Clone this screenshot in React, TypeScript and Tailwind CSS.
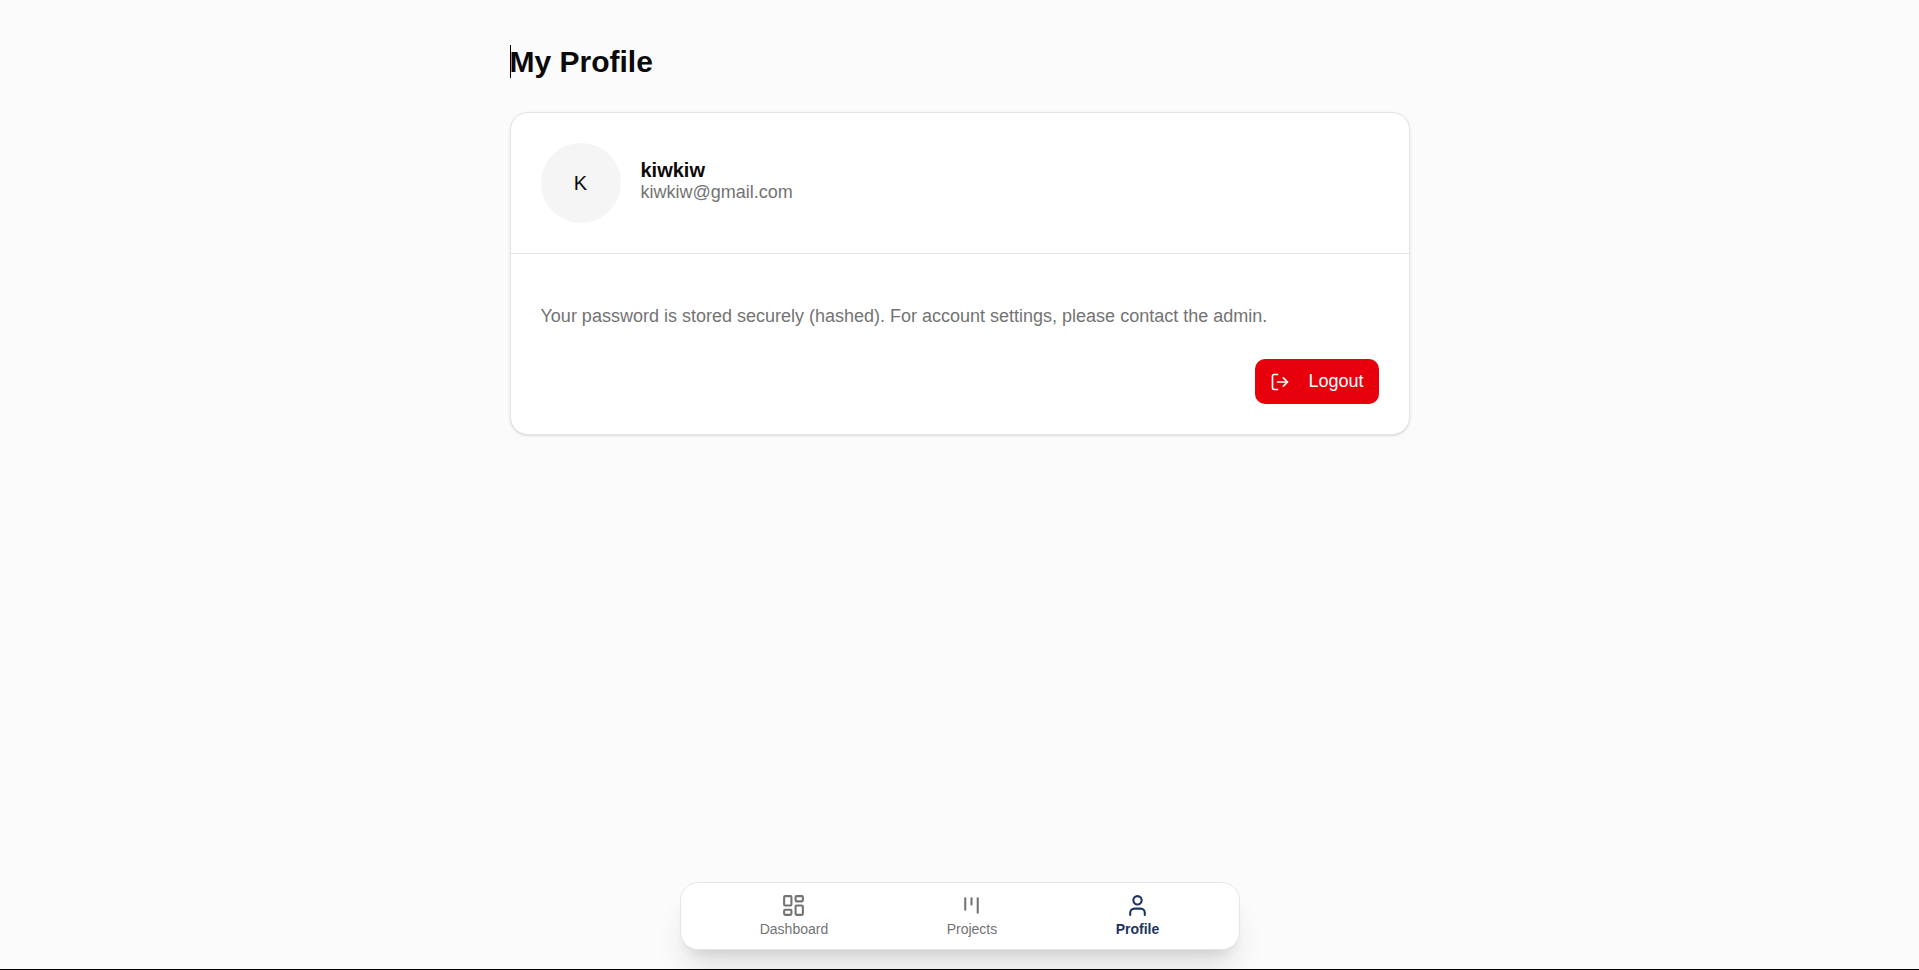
import React from "react";
import { LayoutDashboard, LogOut, User } from "lucide-react";

function KanbanIcon() {
  return (
    <svg
      aria-hidden="true"
      viewBox="0 0 24 24"
      fill="none"
      stroke="currentColor"
      strokeWidth="2"
      strokeLinecap="round"
      strokeLinejoin="round"
      className="size-[25px]"
    >
      <path d="M6 5v11" />
      <path d="M12 5v6" />
      <path d="M18 5v14" />
    </svg>
  );
}

type NavItemProps = {
  label: string;
  icon: React.ReactNode;
  active?: boolean;
};

function NavItem({ label, icon, active = false }: NavItemProps) {
  return (
    <a
      href="#"
      aria-current={active ? "page" : undefined}
      className={
        active
          ? "flex flex-col items-center gap-0.5 font-bold text-[#1c355e]"
          : "flex flex-col items-center gap-0.5 text-[#737373]"
      }
    >
      {icon}
      <span className="text-[14px] leading-[19px]">{label}</span>
    </a>
  );
}

export default function App() {
  return (
    <div className="flex min-h-screen flex-col border-b border-black bg-[#fbfbfb] font-['Liberation_Sans',Arial,sans-serif] text-[#0a0a0a]">
      <main className="mx-auto w-full max-w-[900px] grow pt-10">
        <h1 className="relative mb-7 text-[30px] leading-[44px] font-bold">
          <span className="absolute top-[5px] left-0 h-[33px] w-px bg-black" />
          My Profile
        </h1>

        <section className="rounded-[18px] border border-[#e5e5e5] bg-white shadow-sm">
          <div className="flex items-center gap-5 border-b border-[#e5e5e5] p-[30px]">
            <div className="flex size-20 items-center justify-center rounded-full bg-[#f5f5f5] text-[20px]">
              K
            </div>
            <div className="pb-1">
              <h2 className="text-[20px] leading-[22px] font-bold">kiwkiw</h2>
              <p className="text-[18px] leading-[22px] text-[#737373]">kiwkiw@gmail.com</p>
            </div>
          </div>

          <div className="px-[30px] pt-12 pb-[30px]">
            <p className="text-[18px] leading-7 text-[#737373]">
              Your password is stored securely (hashed). For account settings, please contact the
              admin.
            </p>
            <div className="mt-[29px] flex justify-end">
              <button
                type="button"
                className="flex h-[45px] items-center gap-[18px] rounded-[10px] bg-[#e7000b] px-[15px] text-[18px] text-white"
              >
                <LogOut className="size-5" />
                Logout
              </button>
            </div>
          </div>
        </section>
      </main>

      <nav className="sticky bottom-5 mx-auto mb-[19px] flex w-full max-w-[560px] justify-around rounded-[18px] border border-[#e5e5e5] bg-white px-5 py-2.5 shadow-[0_25px_31px_-6px_rgba(0,0,0,0.1),0_10px_12px_-7px_rgba(0,0,0,0.1)]">
        <NavItem label="Dashboard" icon={<LayoutDashboard className="size-[25px]" />} />
        <NavItem label="Projects" icon={<KanbanIcon />} />
        <NavItem label="Profile" active icon={<User className="size-[25px]" />} />
      </nav>
    </div>
  );
}
